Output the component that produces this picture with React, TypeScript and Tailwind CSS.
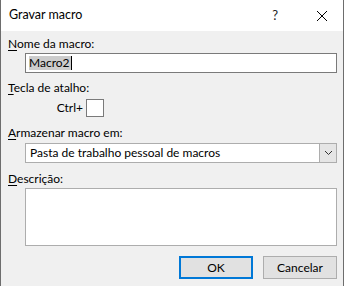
import React from "react";

// "Gravar macro" — the Excel record-macro dialog, drawn as plain Tailwind.

const font = { fontFamily: 'Lato, "Noto Sans", sans-serif' };

const Label = ({ k, rest }: { k: string; rest: string }) => (
  <div className="h-[16px] pl-[7px] leading-[16px] text-[#000]">
    <span className="underline underline-offset-[2px]">{k}</span>
    {rest}
  </div>
);

export default function App() {
  return (
    <div className="h-[288px] w-[344px] bg-white text-[12px]" style={font}>
      <div className="flex h-[286px] w-[344px] flex-col border-x border-[#6d6d6d] bg-[#f0f0f0]">
        {/* title bar */}
        <div className="flex h-[31px] items-center bg-white">
          <div className="pl-[8px] text-[12.5px] text-[#000]">Gravar macro</div>
          <div className="ml-auto mr-[38px] text-[13px] text-[#222]">?</div>
          <svg width="12" height="12" viewBox="0 0 12 12" className="mr-[15px]">
            <path d="M1 1 L11 11 M11 1 L1 11" stroke="#000" strokeWidth="1" />
          </svg>
        </div>

        <div className="flex flex-col pt-[5px]">
          <Label k="N" rest="ome da macro:" />
          <div className="ml-[24px] mr-[6px] mt-[1px] flex h-[20px] items-center border border-[#7a7a7a] bg-white pl-[3px]">
            <span className="bg-[#cccccc] pr-[1px] leading-[14px]">Macro2</span>
            <span className="h-[14px] w-px bg-black" />
          </div>

          <div className="mt-[7px]">
            <Label k="T" rest="ecla de atalho:" />
          </div>
          <div className="mt-[3px] flex h-[18px] items-center">
            <div className="ml-[52px] w-[30px] text-right">Ctrl+</div>
            <div className="ml-[3px] h-[18px] w-[18px] border border-[#7a7a7a] bg-white" />
          </div>

          <div className="mt-[8px]">
            <Label k="A" rest="rmazenar macro em:" />
          </div>
          <div className="ml-[24px] mr-[6px] mt-[2px] flex h-[20px] items-stretch border border-[#adadad] bg-white">
            <div className="flex flex-1 items-center pl-[4px]">Pasta de trabalho pessoal de macros</div>
            <div className="flex w-[17px] items-center justify-center border-l border-[#adadad] bg-[#e5e5e5]">
              <svg width="9" height="6" viewBox="0 0 9 6">
                <path d="M1 1 L4.5 4.5 L8 1" fill="none" stroke="#333" strokeWidth="1" />
              </svg>
            </div>
          </div>

          <div className="mt-[8px]">
            <Label k="D" rest="escrição:" />
          </div>
          <div className="ml-[24px] mr-[6px] mt-[1px] h-[58px] border border-[#adadad] bg-white" />

          <div className="mr-[6px] mt-[10px] flex justify-end gap-[10px]">
            <button className="h-[23px] w-[74px] border-2 border-[#0078d7] bg-[#e1e1e1] text-[12px] text-black">
              OK
            </button>
            <button className="h-[23px] w-[74px] border border-[#adadad] bg-[#e1e1e1] text-[12px] text-black">
              Cancelar
            </button>
          </div>
        </div>
      </div>
    </div>
  );
}
